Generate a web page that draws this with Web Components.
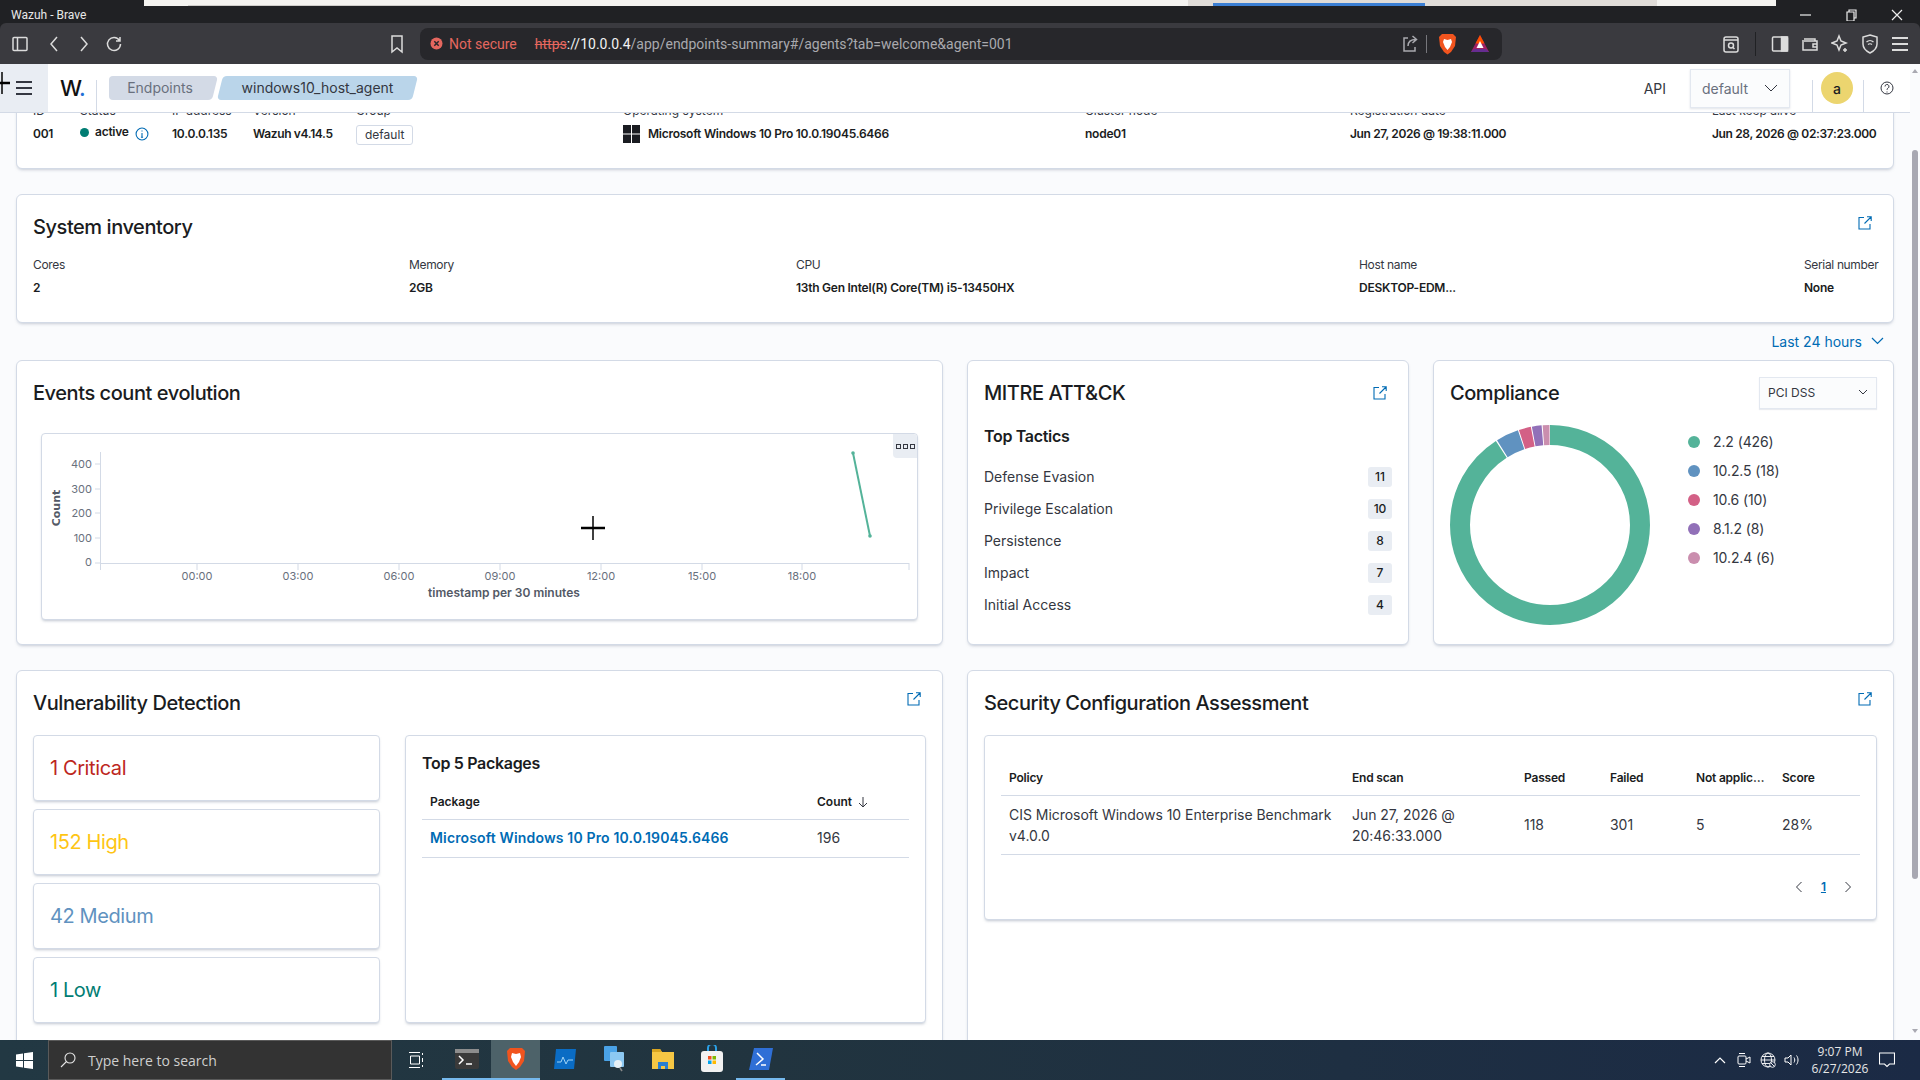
<!DOCTYPE html>
<html>
<head>
<meta charset="utf-8">
<title>Wazuh - Brave</title>
<style>
    html, body { margin: 0; height: 100%; }
    body {
        width: 1920px; height: 1080px; overflow: hidden;
        display: flex; flex-direction: column;
        background: #202124; color: #343741;
        font-family: Inter, "Liberation Sans", sans-serif; font-size: 14px;
    }
    #app { flex: 1; min-height: 0; display: flex; background: #fafbfd; }
    #main { flex: 1; min-width: 0; display: flex; flex-direction: column; }
    #scroller { flex: 1; min-height: 0; overflow: hidden; padding: 0 16px; display: flex; flex-direction: column; }
    #row2 { display: grid; grid-template-columns: 927px 442px 461px; gap: 24px; height: 285px; flex: none; }
    #row3 { display: grid; grid-template-columns: 927px 927px; gap: 24px; height: 420px; flex: none; margin-top: 25px; }
    .gap { margin-top: 25px; }
</style>
</head>
<body>
<top-strip></top-strip>
<browser-bar></browser-bar>
<div id="app">
    <div id="main">
        <app-header></app-header>
        <div id="scroller">
            <agent-info></agent-info>
            <system-inventory class="gap"></system-inventory>
            <time-range></time-range>
            <div id="row2">
                <wz-panel heading="Events count evolution"><events-chart></events-chart></wz-panel>
                <wz-panel heading="MITRE ATT&amp;CK">
                    <ext-link slot="action"></ext-link>
                    <top-tactics>
                        <tactic-row count="11">Defense Evasion</tactic-row>
                        <tactic-row count="10">Privilege Escalation</tactic-row>
                        <tactic-row count="8">Persistence</tactic-row>
                        <tactic-row count="7">Impact</tactic-row>
                        <tactic-row count="4">Initial Access</tactic-row>
                    </top-tactics>
                </wz-panel>
                <wz-panel heading="Compliance">
                    <fake-select slot="action">PCI DSS</fake-select>
                    <compliance-donut></compliance-donut>
                </wz-panel>
            </div>
            <div id="row3">
                <wz-panel heading="Vulnerability Detection">
                    <ext-link slot="action" raised></ext-link>
                    <vuln-summary></vuln-summary>
                </wz-panel>
                <wz-panel heading="Security Configuration Assessment">
                    <ext-link slot="action" raised></ext-link>
                    <sca-table></sca-table>
                </wz-panel>
            </div>
        </div>
    </div>
    <page-scrollbar></page-scrollbar>
</div>
<win-taskbar></win-taskbar>

<script>
    // every element is a template string plus a shadow root, nothing more
    function define(tag, html) {
        const tpl = document.createElement('template');
        tpl.innerHTML = html;
        class el extends HTMLElement {
            constructor() {
                super();
                this.attachShadow({mode: 'open'});
                this.shadowRoot.appendChild(tpl.content.cloneNode(true));
            }
            connectedCallback() {
                this.shadowRoot.querySelectorAll('[data-attr]').forEach(n => {
                    n.textContent = this.getAttribute(n.dataset.attr);
                });
            }
        }
        customElements.define(tag, el);
    }

    define('top-strip', `
        <style>
            :host { display: flex; height: 6px; background: #202124; flex: none; }
            div { height: 6px; }
            #a { margin-left: 144px; width: 1044px; background: #f4f3f0; position: relative; }
            #a::after { content: ""; display: block; margin-left: 44px; width: 272px; height: 1px; background: #cfcdca; transform: translateY(5px); }
            #b { width: 25px; background: #e0dcd8; }
            #c { width: 212px; background: #e0dcd8; display: flex; align-items: flex-end; }
            #c i { display: block; width: 100%; height: 3px; background: #3b7fd4; }
            #d { width: 232px; background: #e0dcd8; }
            #e { width: 119px; background: #f4f3f0; }
        </style>
        <div id="a"></div><div id="b"></div><div id="c"><i></i></div><div id="d"></div><div id="e"></div>`);

    define('browser-bar', `
        <style>
            :host { display: block; flex: none; font-family: Roboto, "Liberation Sans", sans-serif; color: #eee; }
            #title { height: 17px; background: #202124; display: flex; align-items: center; padding: 0 0 0 11px; font-size: 12px; color: #e8e8e8; }
            #title span { flex: 1; }
            #controls { display: flex; }
            #controls svg { width: 46px; height: 12px; }
            #tools { height: 41px; background: #3a3a3f; border-radius: 6px 6px 0 0; display: flex; align-items: center; }
            .ic { flex: none; display: flex; justify-content: center; align-items: center; }
            svg { fill: none; stroke: #dcdcdc; stroke-width: 1.5; display: block; }
            #addr { width: 1082px; height: 32px; margin-left: 10px; background: #27272b; border-radius: 8px; display: flex; align-items: center; font-size: 14px; }
            #sec { color: #e5675f; margin-left: 10px; white-space: nowrap; display: flex; align-items: center; gap: 6px; }
            #url { margin-left: 18px; white-space: nowrap; flex: 1; color: #a9a9ae; }
            #url s { color: #e5675f; }
            #url b { font-weight: 400; color: #f2f2f2; }
        </style>
        <div id="title"><span>Wazuh - Brave</span>
            <div id="controls">
                <svg viewBox="0 0 46 12" style="stroke:#eee;stroke-width:1.2"><path d="M18 6h11"/></svg>
                <svg viewBox="0 0 46 12" style="stroke:#eee;stroke-width:1.2"><path d="M19 3h7v9h-7zM21 3V1h7v8h-2"/></svg>
                <svg viewBox="0 0 46 12" style="stroke:#eee;stroke-width:1.2"><path d="M18 1l10 10M28 1L18 11"/></svg>
            </div>
        </div>
        <div id="tools">
            <div class="ic" style="width:34px;margin-left:3px"><svg width="16" height="16" viewBox="0 0 16 16"><rect x="1" y="1.5" width="14" height="13" rx="1"/><path d="M5.5 1.5v13"/></svg></div>
            <div class="ic" style="width:30px;margin-left:2px"><svg width="10" height="18" viewBox="0 0 10 18"><path d="M8 2L2 9l6 7"/></svg></div>
            <div class="ic" style="width:30px"><svg width="10" height="18" viewBox="0 0 10 18"><path d="M2 2l6 7-6 7"/></svg></div>
            <div class="ic" style="width:30px"><svg width="18" height="18" viewBox="0 0 18 18"><path d="M14.5 5.5A6.5 6.5 0 1 0 15.5 9M15 2v4h-4"/></svg></div>
            <div class="ic" style="width:26px;margin-left:255px"><svg width="14" height="20" viewBox="0 0 14 20"><path d="M2 2h10v16l-5-4-5 4z"/></svg></div>
            <div id="addr">
                <div id="sec">
                    <svg width="13" height="13" viewBox="0 0 13 13" style="stroke:none"><circle cx="6.5" cy="6.5" r="6" fill="#e5675f"/><path d="M4.3 4.3l4.4 4.4M8.7 4.3L4.3 8.7" stroke="#27272b" stroke-width="1.5"/></svg>
                    <span>Not secure</span>
                </div>
                <div id="url"><s>https</s><b>://10.0.0.4</b>/app/endpoints-summary#/agents?tab=welcome&amp;agent=001</div>
                <div class="ic" style="width:22px"><svg width="17" height="18" viewBox="0 0 17 18" style="stroke:#a9a9ae"><path d="M6 3H2v13h11v-4M6 11c0-4 3-6.500 8-6.500M10.500 1l4 3.500-4 3.500"/></svg></div>
                <div style="width:1px;height:18px;background:#77777c;margin:0 9px 0 5px"></div>
                <div class="ic" style="width:22px"><svg width="19" height="22" viewBox="0 0 19 22" style="stroke:none"><path d="M4 1h11l3 3-1 9-4 6-3.500 2.500L6 19l-4-6-1-9z" fill="#f1541e"/><path d="M6 6l3.500 1L13 6l1 3-2 5-2.500 3L7 14 5 9z" fill="#fff"/></svg></div>
                <div class="ic" style="width:22px;margin:0 11px 0 11px"><svg width="20" height="20" viewBox="0 0 20 20" style="stroke:none"><path d="M10 1l9 17H1z" fill="#9e1f63"/><path d="M10 1l4.500 8.500h-9z" fill="#ff5000"/><path d="M10 7l3.500 7h-7z" fill="#fff"/><path d="M1 18h18l-3-3H4z" fill="#662d91"/></svg></div>
            </div>
            <div class="ic" style="width:30px;margin-left:214px"><svg width="18" height="20" viewBox="0 0 18 20"><rect x="2" y="3" width="14" height="15" rx="2"/><path d="M2 6h14"/><circle cx="9" cy="11.500" r="2.500"/><path d="M11 13.500l1.500 1.500"/></svg></div>
            <div style="width:1px;height:24px;background:#202124;margin:0 9px"></div>
            <div class="ic" style="width:30px;margin-left:0"><svg width="18" height="18" viewBox="0 0 18 18"><rect x="1.500" y="2" width="15" height="14" rx="1"/><rect x="10.500" y="2" width="6" height="14" fill="#dcdcdc"/></svg></div>
            <div class="ic" style="width:30px"><svg width="18" height="18" viewBox="0 0 18 18"><path d="M3 4h11v2M2 5v10h14V6H3"/><path d="M16 9h-4v3h4"/></svg></div>
            <div class="ic" style="width:30px"><svg width="18" height="20" viewBox="0 0 18 20"><path d="M8 2l2 5 5 2-5 2-2 5-2-5-5-2 5-2z"/><path d="M14 14v4M12 16h4"/></svg></div>
            <div class="ic" style="width:30px"><svg width="18" height="20" viewBox="0 0 18 20"><path d="M9 1l7 2v7c0 4-3 7-7 9-4-2-7-5-7-9V3z"/><path d="M5.500 8c2-2 5-2 7 0M7 10.500c1-1 3-1 4 0" stroke-width="1.200"/></svg></div>
            <div class="ic" style="width:30px;margin-left:0"><svg width="18" height="16" viewBox="0 0 18 16"><path d="M1 2h16M1 8h16M1 14h16" stroke-width="2"/></svg></div>
        </div>`);

    define('app-header', `
        <style>
            :host { display: flex; height: 49px; flex: none; box-sizing: border-box; background: #fff; border-bottom: 1px solid #d3dae6; align-items: center; position: relative; z-index: 2; }
            #burger { width: 48px; height: 48px; background: #e9edf3; display: flex; align-items: center; justify-content: center; flex: none; }
            #cursor { position: absolute; left: -6px; top: 8px; }
            #logo { width: 48px; box-sizing: border-box; padding-left: 12px; font-size: 22px; font-weight: 500; color: #111; line-height: 48px; letter-spacing: -1px; height: 48px; }
            #logo i { font-style: normal; color: #1f6fd6; }
            #sep { width: 1px; height: 32px; background: #d3dae6; align-self: flex-end; margin-right: 12px; }
            .crumb { height: 24px; line-height: 24px; position: relative; z-index: 0; padding: 0 12px; text-align: center; box-sizing: border-box; }
            .crumb::before { content: ""; position: absolute; inset: 0; border-radius: 4px; background: var(--bg); z-index: -1; transform: skewX(-14deg); }
            #c1 { --bg: #d3dae6; width: 106px; margin-right: 5px; padding: 0 14px 0 10px; color: #69707d; }
            #c1::before { left: 20px; }
            #c1::after { content: ""; position: absolute; left: 0; top: 0; bottom: 0; width: 50%; border-radius: 4px; background: var(--bg); z-index: -1; }
            #c2 { --bg: #bad5ea; width: 195px; color: #343741; }
            #fill { flex: 1; }
            #api { margin-right: 24px; }
            #sel { width: 100px; height: 39px; box-sizing: border-box; border: 1px solid #e3e8f0; background: #fbfcfd; box-shadow: 0 1px 2px rgba(152,162,179,.3); display: flex; align-items: center; justify-content: space-between; padding: 0 11px; color: #69707d; margin-right: 22px; }
            .v { width: 1px; height: 32px; background: #d3dae6; align-self: flex-end; }
            #ava { width: 32px; height: 32px; border-radius: 50%; background: #ecd56f; display: flex; align-items: center; justify-content: center; margin: 0 10px 0 8px; font-size: 14px; font-weight: 500; color: #1a1c21; }
            #help { width: 46px; display: flex; justify-content: center; }
            svg { display: block; }
        </style>
        <div id="burger"><svg width="16" height="14" viewBox="0 0 16 14" fill="#343741"><rect y="0" width="16" height="2"/><rect y="6" width="16" height="2"/><rect y="12" width="16" height="2"/></svg></div>
        <svg id="cursor" width="16" height="22" viewBox="0 0 16 22"><path d="M8 0v22" stroke="#000" stroke-width="1.500"/><path d="M0 11h16" stroke="#000" stroke-width="2.500"/></svg>
        <div id="logo">W<i>.</i></div>
        <div id="sep"></div>
        <div class="crumb" id="c1">Endpoints</div>
        <div class="crumb" id="c2">windows10_host_agent</div>
        <div id="fill"></div>
        <div id="api">API</div>
        <div id="sel"><span>default</span><svg width="14" height="10" viewBox="0 0 14 10" fill="none" stroke="#343741"><path d="M1 2l6 6 6-6"/></svg></div>
        <div class="v"></div>
        <div id="ava">a</div>
        <div class="v"></div>
        <div id="help"><svg width="14" height="14" viewBox="0 0 14 14" fill="none" stroke="#343741"><circle cx="7" cy="7" r="6"/><path d="M5 5.500a2 2 0 1 1 3 1.700c-.7.400-1 .800-1 1.600M7 10.500v1"/></svg></div>`);

    define('wz-panel', `
        <style>
            :host { display: flex; flex-direction: column; box-sizing: border-box; background: #fff; border: 1px solid #d3dae6; border-radius: 6px; padding: 16px; box-shadow: 0 2px 3px -1px rgba(152,162,179,.5); min-width: 0; }
            header { display: flex; justify-content: space-between; align-items: center; height: 32px; flex: none; }
            h2 { margin: 0; font-size: 20px; line-height: 24px; font-weight: 500; letter-spacing: -.022em; color: #1a1c21; white-space: nowrap; }
        </style>
        <header><h2 data-attr="heading"></h2><slot name="action"></slot></header>
        <slot></slot>`);

    define('ext-link', `
        <style>
            :host { display: flex; width: 24px; height: 24px; align-items: center; justify-content: center; }
            :host([raised]) { margin-top: -8px; }
            svg { display: block; }
        </style>
        <svg width="14" height="14" viewBox="0 0 14 14" fill="none" stroke="#006bb4" stroke-width="1.100"><path d="M6 1.500H1v11.500h11V8M6.500 7.500L13 1M9 .8h4.200V5"/></svg>`);

    define('agent-info', `
        <style>
            :host { display: grid; flex: none; grid-template-columns: 47px 92px 81px 103px 267px 462px 265px 362px auto; grid-template-rows: 16px 30px; box-sizing: border-box; height: 84px; margin-top: -28px; padding: 17px 16px 0; background: #fff; border: 1px solid #d3dae6; border-radius: 6px; box-shadow: 0 2px 3px -1px rgba(152,162,179,.5); font-size: 12px; line-height: 16px; }
            .l { color: #343741; white-space: nowrap; }
            .v { font-weight: 600; letter-spacing: -.25px; color: #1a1c21; white-space: nowrap; display: flex; align-items: center; height: 30px; }
            .n { letter-spacing: -.36px; }
            #st { gap: 6px; }
            #dot { width: 9px; height: 9px; border-radius: 50%; background: #017d73; transform: translateY(-2px); }
            #act { transform: translateY(-2px); }
            #group { border: 1px solid #d3dae6; border-radius: 3px; font-weight: 400; letter-spacing: 0; color: #343741; padding: 0 8px; line-height: 18px; height: 20px; box-sizing: border-box; transform: translateY(1px); }
            #os { gap: 8px; }
            svg { display: block; }
        </style>
        <div class="l">ID</div><div class="l">Status</div><div class="l">IP address</div><div class="l">Version</div><div class="l">Group</div><div class="l">Operating system</div><div class="l">Cluster node</div><div class="l">Registration date</div><div class="l">Last keep alive</div>
        <div class="v">001</div>
        <div class="v" id="st"><span id="dot"></span><span id="act">active</span><svg width="14" height="14" viewBox="0 0 13 13" fill="none" stroke="#006bb4"><circle cx="6.500" cy="6.500" r="5.500"/><path d="M6.500 5.500v4M5.500 9.500h2M6.500 3.200v1"/></svg></div>
        <div class="v">10.0.0.135</div>
        <div class="v n">Wazuh v4.14.5</div>
        <div class="v"><span id="group">default</span></div>
        <div class="v" id="os"><svg width="17" height="18" viewBox="0 0 17 18" fill="#1a1c21"><rect width="8" height="8.500"/><rect x="9" width="8" height="8.500"/><rect y="9.500" width="8" height="8.500"/><rect x="9" y="9.500" width="8" height="8.500"/></svg>Microsoft Windows 10 Pro 10.0.19045.6466</div>
        <div class="v">node01</div>
        <div class="v n">Jun 27, 2026 @ 19:38:11.000</div>
        <div class="v n">Jun 28, 2026 @ 02:37:23.000</div>`);

    define('system-inventory', `
        <style>
            :host { display: block; flex: none; height: 129px; box-sizing: border-box; background: #fff; border: 1px solid #d3dae6; border-radius: 6px; padding: 16px; box-shadow: 0 2px 3px -1px rgba(152,162,179,.5); }
            header { display: flex; justify-content: space-between; align-items: center; height: 32px; }
            h2 { margin: 0; font-size: 20px; line-height: 24px; font-weight: 500; letter-spacing: -.022em; color: #1a1c21; }
            #g { display: grid; grid-template-columns: 376px 387px 563px 445px auto; grid-template-rows: 16px 16px; row-gap: 7px; margin-top: 14px; font-size: 12px; line-height: 16px; white-space: nowrap; }
            span { letter-spacing: -.35px; }
            b { font-weight: 600; letter-spacing: -.25px; color: #1a1c21; }
        </style>
        <header><h2>System inventory</h2><ext-link raised></ext-link></header>
        <div id="g">
            <span>Cores</span><span>Memory</span><span>CPU</span><span>Host name</span><span>Serial number</span>
            <b>2</b><b>2GB</b><b>13th Gen Intel(R) Core(TM) i5-13450HX</b><b>DESKTOP-EDM...</b><b>None</b>
        </div>`);

    define('time-range', `
        <style>
            :host { display: flex; flex: none; height: 37px; justify-content: flex-end; align-items: center; padding-right: 10px; color: #006bb4; gap: 9px; padding-bottom: 1px; box-sizing: border-box; }
            svg { display: block; }
        </style>
        <span>Last 24 hours</span><svg width="13" height="8" viewBox="0 0 13 8" fill="none" stroke="#006bb4" stroke-width="1.200"><path d="M1 1l5.500 5.500L12 1"/></svg>`);

    define('events-chart', `
        <style>
            :host { display: block; margin: 24px 8px 0; height: 187px; box-sizing: border-box; background: #fff; border: 1px solid #d3dae6; border-radius: 4px; box-shadow: 0 2px 3px -1px rgba(152,162,179,.6); position: relative; }
            svg { display: block; }
            text { font-family: Inter, sans-serif; font-size: 11px; fill: #69707d; }
            .t { font-weight: 600; font-size: 12px; fill: #535966; }
            .c { font-family: "DejaVu Sans", sans-serif; font-weight: 700; font-size: 11px; fill: #535966; }
            #more { position: absolute; right: 0; top: 0; width: 24px; height: 24px; background: #e9edf3; border-radius: 0 4px 0 4px; display: flex; align-items: center; justify-content: center; gap: 2px; }
            #more i { width: 3px; height: 3px; border: 1px solid #343741; display: block; }
        </style>
        <svg width="874" height="185" viewBox="42 434 874 185">
            <g stroke="#d3dae6" fill="none">
                <path d="M100.500 452v111.500H909M95 464h5M95 489h5M95 513h5M95 538h5M95 563h5"/>
                <path d="M100.500 563v7M197 563v7M298 563v7M399 563v7M500 563v7M601 563v7M702 563v7M802 563v7M909 563v7"/>
            </g>
            <g text-anchor="end">
                <text x="92" y="468">400</text><text x="92" y="493">300</text><text x="92" y="517">200</text><text x="92" y="542">100</text><text x="92" y="566">0</text>
            </g>
            <g text-anchor="middle">
                <text x="197" y="580">00:00</text><text x="298" y="580">03:00</text><text x="399" y="580">06:00</text><text x="500" y="580">09:00</text><text x="601" y="580">12:00</text><text x="702" y="580">15:00</text><text x="802" y="580">18:00</text>
                <text class="t" x="504" y="597">timestamp per 30 minutes</text>
                <text class="c" transform="translate(60 508) rotate(-90)">Count</text>
            </g>
            <path d="M853 453l17 83" stroke="#54b399" stroke-width="2" fill="none"/>
            <circle cx="853" cy="453" r="1.800" fill="#54b399"/><circle cx="870" cy="536" r="1.800" fill="#54b399"/>
            <path d="M593 516v24" stroke="#000" stroke-width="1.500"/><path d="M581 528h24" stroke="#000" stroke-width="2.500"/>
        </svg>
        <div id="more"><i></i><i></i><i></i></div>`);

    define('top-tactics', `
        <style>
            :host { display: block; }
            h3 { margin: 15px 0 13px; font-size: 16px; line-height: 24px; font-weight: 600; letter-spacing: -.02em; color: #1a1c21; }
        </style>
        <h3>Top Tactics</h3><slot></slot>`);

    define('tactic-row', `
        <style>
            :host { display: flex; height: 32px; align-items: center; justify-content: space-between; }
            span { margin-bottom: 1px; }
            b { width: 24px; height: 20px; line-height: 20px; text-align: center; background: #e9edf3; border-radius: 3px; font-size: 12px; font-weight: 500; color: #1a1c21; }
        </style>
        <span><slot></slot></span><b data-attr="count"></b>`);

    define('fake-select', `
        <style>
            :host { display: flex; width: 118px; height: 32px; box-sizing: border-box; border: 1px solid #e3e8f0; background: #fbfcfd; box-shadow: 0 1px 1px rgba(152,162,179,.2); align-items: center; justify-content: space-between; padding: 0 8px 1px; font-size: 12px; color: #343741; }
            svg { display: block; }
        </style>
        <span><slot></slot></span><svg width="10" height="7" viewBox="0 0 10 7" fill="none" stroke="#343741"><path d="M1 1l4 4 4-4"/></svg>`);

    define('compliance-donut', `
        <style>
            :host { display: flex; margin-top: 16px; gap: 38px; }
            svg { display: block; flex: none; }
            ul { list-style: none; margin: 2px 0 0; padding: 0; }
            li { height: 29px; display: flex; align-items: center; gap: 13px; letter-spacing: -.1px; }
            i { width: 12px; height: 12px; border-radius: 50%; display: block; }
        </style>
        <svg width="200" height="200" viewBox="0 0 200 200">
            <g fill="none" stroke-width="20" transform="rotate(-90 100 100)">
                <circle cx="100" cy="100" r="90" pathLength="468" stroke="#54b399" stroke-dasharray="425.400 468"/>
                <circle cx="100" cy="100" r="90" pathLength="468" stroke="#6092c0" stroke-dasharray="17.200 468" stroke-dashoffset="-426.400"/>
                <circle cx="100" cy="100" r="90" pathLength="468" stroke="#d36086" stroke-dasharray="9.200 468" stroke-dashoffset="-444.400"/>
                <circle cx="100" cy="100" r="90" pathLength="468" stroke="#9170b8" stroke-dasharray="7.200 468" stroke-dashoffset="-454.400"/>
                <circle cx="100" cy="100" r="90" pathLength="468" stroke="#ca8eae" stroke-dasharray="5.200 468" stroke-dashoffset="-462.400"/>
            </g>
        </svg>
        <ul>
            <li><i style="background:#54b399"></i>2.2 (426)</li>
            <li><i style="background:#6092c0"></i>10.2.5 (18)</li>
            <li><i style="background:#d36086"></i>10.6 (10)</li>
            <li><i style="background:#9170b8"></i>8.1.2 (8)</li>
            <li><i style="background:#ca8eae"></i>10.2.4 (6)</li>
        </ul>`);

    define('vuln-summary', `
        <style>
            :host { display: grid; grid-template-columns: 347px 521px; column-gap: 25px; margin-top: 16px; height: 288px; }
            #stats { display: grid; grid-auto-rows: 66px; row-gap: 8px; }
            .card { box-sizing: border-box; background: #fff; border: 1px solid #d3dae6; border-radius: 4px; box-shadow: 0 2px 3px -1px rgba(152,162,179,.6); }
            .s { display: flex; align-items: center; padding-left: 16px; font-size: 20px; letter-spacing: -.02em; }
            #pk { padding: 15px 16px 16px; }
            h3 { margin: 0 0 9px; font-size: 16px; line-height: 24px; font-weight: 600; letter-spacing: -.02em; color: #1a1c21; }
            .r { display: grid; grid-template-columns: 387px 1fr; padding: 0 8px; align-items: center; border-bottom: 1px solid #d3dae6; }
            #th { height: 35px; font-size: 12px; font-weight: 600; color: #1a1c21; }
            #th span { display: flex; align-items: center; gap: 5px; }
            #td { height: 38px; padding-bottom: 2px; box-sizing: border-box; }
            a { color: #006bb4; font-weight: 600; letter-spacing: .15px; text-decoration: none; white-space: nowrap; }
            svg { display: block; }
        </style>
        <div id="stats">
            <div class="card s" style="color:#bd271e">1 Critical</div>
            <div class="card s" style="color:#fec514">152 High</div>
            <div class="card s" style="color:#6092c0">42 Medium</div>
            <div class="card s" style="color:#017d73">1 Low</div>
        </div>
        <div class="card" id="pk">
            <h3>Top 5 Packages</h3>
            <div class="r" id="th"><div>Package</div><span>Count <svg width="12" height="12" viewBox="0 0 12 12" fill="none" stroke="#343741"><path d="M6 1v10M2 7l4 4 4-4"/></svg></span></div>
            <div class="r" id="td"><a>Microsoft Windows 10 Pro 10.0.19045.6466</a><div>196</div></div>
        </div>`);

    define('sca-table', `
        <style>
            :host { display: block; margin-top: 16px; height: 185px; box-sizing: border-box; background: #fff; border: 1px solid #d3dae6; border-radius: 4px; padding: 25px 16px 0; box-shadow: 0 2px 3px -1px rgba(152,162,179,.6); }
            table { border-collapse: collapse; table-layout: fixed; width: 859px; }
            th { font-size: 12px; font-weight: 600; letter-spacing: -.2px; color: #1a1c21; text-align: left; height: 34px; padding: 0 8px; border-bottom: 1px solid #d3dae6; white-space: nowrap; overflow: hidden; text-overflow: ellipsis; box-sizing: border-box; }
            td { padding: 8px; height: 58px; line-height: 21px; letter-spacing: -.03px; border-bottom: 1px solid #d3dae6; box-sizing: border-box; }
            #pg { display: flex; justify-content: flex-end; align-items: center; gap: 18px; height: 32px; margin-top: 16px; padding-right: 8px; font-size: 12px; }
            #pg u { color: #006bb4; font-weight: 600; }
            svg { display: block; }
        </style>
        <table>
            <colgroup><col style="width:343px"><col style="width:172px"><col style="width:86px"><col style="width:86px"><col style="width:86px"><col style="width:86px"></colgroup>
            <tr><th>Policy</th><th>End scan</th><th>Passed</th><th>Failed</th><th>Not applicable</th><th>Score</th></tr>
            <tr><td>CIS Microsoft Windows 10 Enterprise Benchmark v4.0.0</td><td>Jun 27, 2026 @ 20:46:33.000</td><td>118</td><td>301</td><td>5</td><td>28%</td></tr>
        </table>
        <div id="pg">
            <svg width="8" height="12" viewBox="0 0 8 12" fill="none" stroke="#343741"><path d="M6.500 1L1.500 6l5 5"/></svg>
            <u>1</u>
            <svg width="8" height="12" viewBox="0 0 8 12" fill="none" stroke="#343741"><path d="M1.500 1l5 5-5 5"/></svg>
        </div>`);

    define('page-scrollbar', `
        <style>
            :host { display: flex; flex-direction: column; width: 10px; flex: none; background: #fafbfd; align-items: center; }
            #up, #down { width: 0; height: 0; border: 3px solid transparent; }
            #up { border-bottom: 4px solid #a9a9b2; margin-top: 2px; }
            #thumb { width: 6px; height: 729px; margin-top: 77px; background: #a8a8b2; border-radius: 3px; }
            #down { border-top: 4px solid #a9a9b2; margin-top: 150px; }
        </style>
        <div id="up"></div><div id="thumb"></div><div id="down"></div>`);

    define('win-taskbar', `
        <style>
            :host { display: flex; height: 40px; flex: none; align-items: stretch; background: linear-gradient(90deg, #223843 0%, #21343f 40%, #1b2a45 100%); color: #e6e6e6; font-family: "Open Sans", "Noto Sans", sans-serif; }
            svg { display: block; }
            .cell { width: 49px; flex: none; display: flex; align-items: center; justify-content: center; box-sizing: border-box; border-bottom: 2px solid transparent; }
            .on { border-bottom-color: #76b9ed; }
            #start { width: 48px; flex: none; display: flex; align-items: center; justify-content: center; }
            #search { width: 344px; flex: none; box-sizing: border-box; background: #333; border: 1px solid #5a5a5a; display: flex; align-items: center; padding-left: 11px; gap: 12px; font-size: 14px; color: #cfcfcf; }
            #tv { width: 50px; flex: none; display: flex; align-items: center; justify-content: center; }
            #fill { flex: 1; }
            .tray { display: flex; align-items: center; justify-content: center; width: 24px; flex: none; }
            #clock { width: 68px; text-align: center; font-size: 12px; line-height: 17px; align-self: center; margin-left: 2px; }
            #note { width: 30px; display: flex; align-items: center; justify-content: center; margin-right: 18px; margin-left: -2px; box-sizing: border-box; }
        </style>
        <div id="start"><svg width="17" height="17" viewBox="0 0 17 17" fill="#fff"><path d="M0 2.500l7-1v6.500H0zM8 1.300L17 0v8H8zM0 9h7v6.500l-7-1zM8 9h9v8l-9-1.300z"/></svg></div>
        <div id="search">
            <svg width="16" height="16" viewBox="0 0 16 16" fill="none" stroke="#e6e6e6" stroke-width="1.100"><circle cx="10" cy="6" r="5"/><path d="M6.500 9.500L1 15"/></svg>
            <span>Type here to search</span>
        </div>
        <div id="tv"><svg width="16" height="16" viewBox="0 0 16 16" fill="none" stroke="#fff"><path d="M0 .500h11M0 15.500h11M1.500 4h9v8h-9zM13.500 1v2M13.500 6v4M13.500 13v2" /></svg></div>
        <div class="cell on"><svg width="24" height="20" viewBox="0 0 24 20"><rect width="24" height="20" rx="2" fill="#3a3a3a"/><rect width="24" height="4" fill="#8d8d8d"/><path d="M4 7l4 4-4 4" fill="none" stroke="#fff" stroke-width="1.500"/><path d="M11 15h6" stroke="#fff" stroke-width="1.500"/></svg></div>
        <div class="cell on" style="background:#4d6269"><svg width="20" height="24" viewBox="0 0 20 24"><path d="M4 1h12l3 3-1 10-4 6-4 3-4-3-4-6L1 4z" fill="#f1541e"/><path d="M6 6l4 1 4-1 1 4-2 5-3 4-3-4-2-5z" fill="#fff"/></svg></div>
        <div class="cell"><svg width="24" height="24" viewBox="0 0 24 24"><path d="M3 2h20l-2 20H1z" fill="#0a6cc4"/><path d="M4 15h4l2-5 3 7 2-4h5" fill="none" stroke="#9fd3f5"/></svg></div>
        <div class="cell"><svg width="22" height="28" viewBox="0 0 22 28"><rect x="1" y="1" width="13" height="15" rx="1" fill="#4aa3e8"/><rect x="7" y="7" width="14" height="15" rx="1" fill="#8cc8f2"/><circle cx="15" cy="19" r="4" fill="#e6f1f7"/><path d="M17 23l2 3" stroke="#8a8a8a" stroke-width="1.500"/></svg></div>
        <div class="cell"><svg width="22" height="20" viewBox="0 0 22 20"><path d="M0 0h8l2 3h12v17H0z" fill="#f6c744"/><path d="M0 0h8l2 3H0z" fill="#d9a520"/><path d="M6 20v-7h10v7h-3v-3H9v3z" fill="#2a7fd0"/></svg></div>
        <div class="cell"><svg width="22" height="28" viewBox="0 0 22 28"><path d="M7 7V3a4 4 0 0 1 8 0v4" fill="none" stroke="#2aa0e6" stroke-width="2"/><rect y="6" width="22" height="21" rx="3" fill="#f2f2f2"/><rect x="7" y="11" width="3.500" height="3.500" fill="#f25022"/><rect x="11.500" y="11" width="3.500" height="3.500" fill="#7fba00"/><rect x="7" y="15.500" width="3.500" height="3.500" fill="#00a4ef"/><rect x="11.500" y="15.500" width="3.500" height="3.500" fill="#ffb900"/></svg></div>
        <div class="cell on"><svg width="24" height="22" viewBox="0 0 24 22"><path d="M5 0h19l-4 22H0z" fill="#2f6fd6"/><path d="M8 5l6 6-7 6M12 17h5" fill="none" stroke="#fff" stroke-width="1.500"/></svg></div>
        <div id="fill"></div>
        <div class="tray"><svg width="12" height="7" viewBox="0 0 12 7" fill="none" stroke="#fff" stroke-width="1.200"><path d="M1 6l5-5 5 5"/></svg></div>
        <div class="tray"><svg width="14" height="16" viewBox="0 0 14 16" fill="none" stroke="#fff"><rect x="1" y="4" width="8" height="8" rx="1"/><path d="M9 7l4-2v6l-4-2M2 1.500h6M2 14.500h6"/></svg></div>
        <div class="tray"><svg width="16" height="16" viewBox="0 0 16 16" fill="none" stroke="#fff" stroke-width=".900"><circle cx="8" cy="8" r="7"/><ellipse cx="8" cy="8" rx="3.500" ry="7"/><path d="M1 8h14M2 4.500h12M2 11.500h12"/><circle cx="12.500" cy="12.500" r="2.800" fill="#1b2a45"/><path d="M10.800 10.800l3.400 3.400"/></svg></div>
        <div class="tray"><svg width="16" height="14" viewBox="0 0 16 14" fill="none" stroke="#fff"><path d="M1 5h3l3-3v10L4 9H1zM10 4.500c1 1.500 1 3.500 0 5M12.500 2.500c2 2.500 2 6.500 0 9"/></svg></div>
        <div id="clock">9:07 PM<br>6/27/2026</div>
        <div id="note"><svg width="16" height="16" viewBox="0 0 16 16" fill="none" stroke="#fff" stroke-width="1.100"><path d="M.500 1h15v11h-5L8 14.500 5.500 12h-5z"/></svg></div>`);
</script>
</body>
</html>
